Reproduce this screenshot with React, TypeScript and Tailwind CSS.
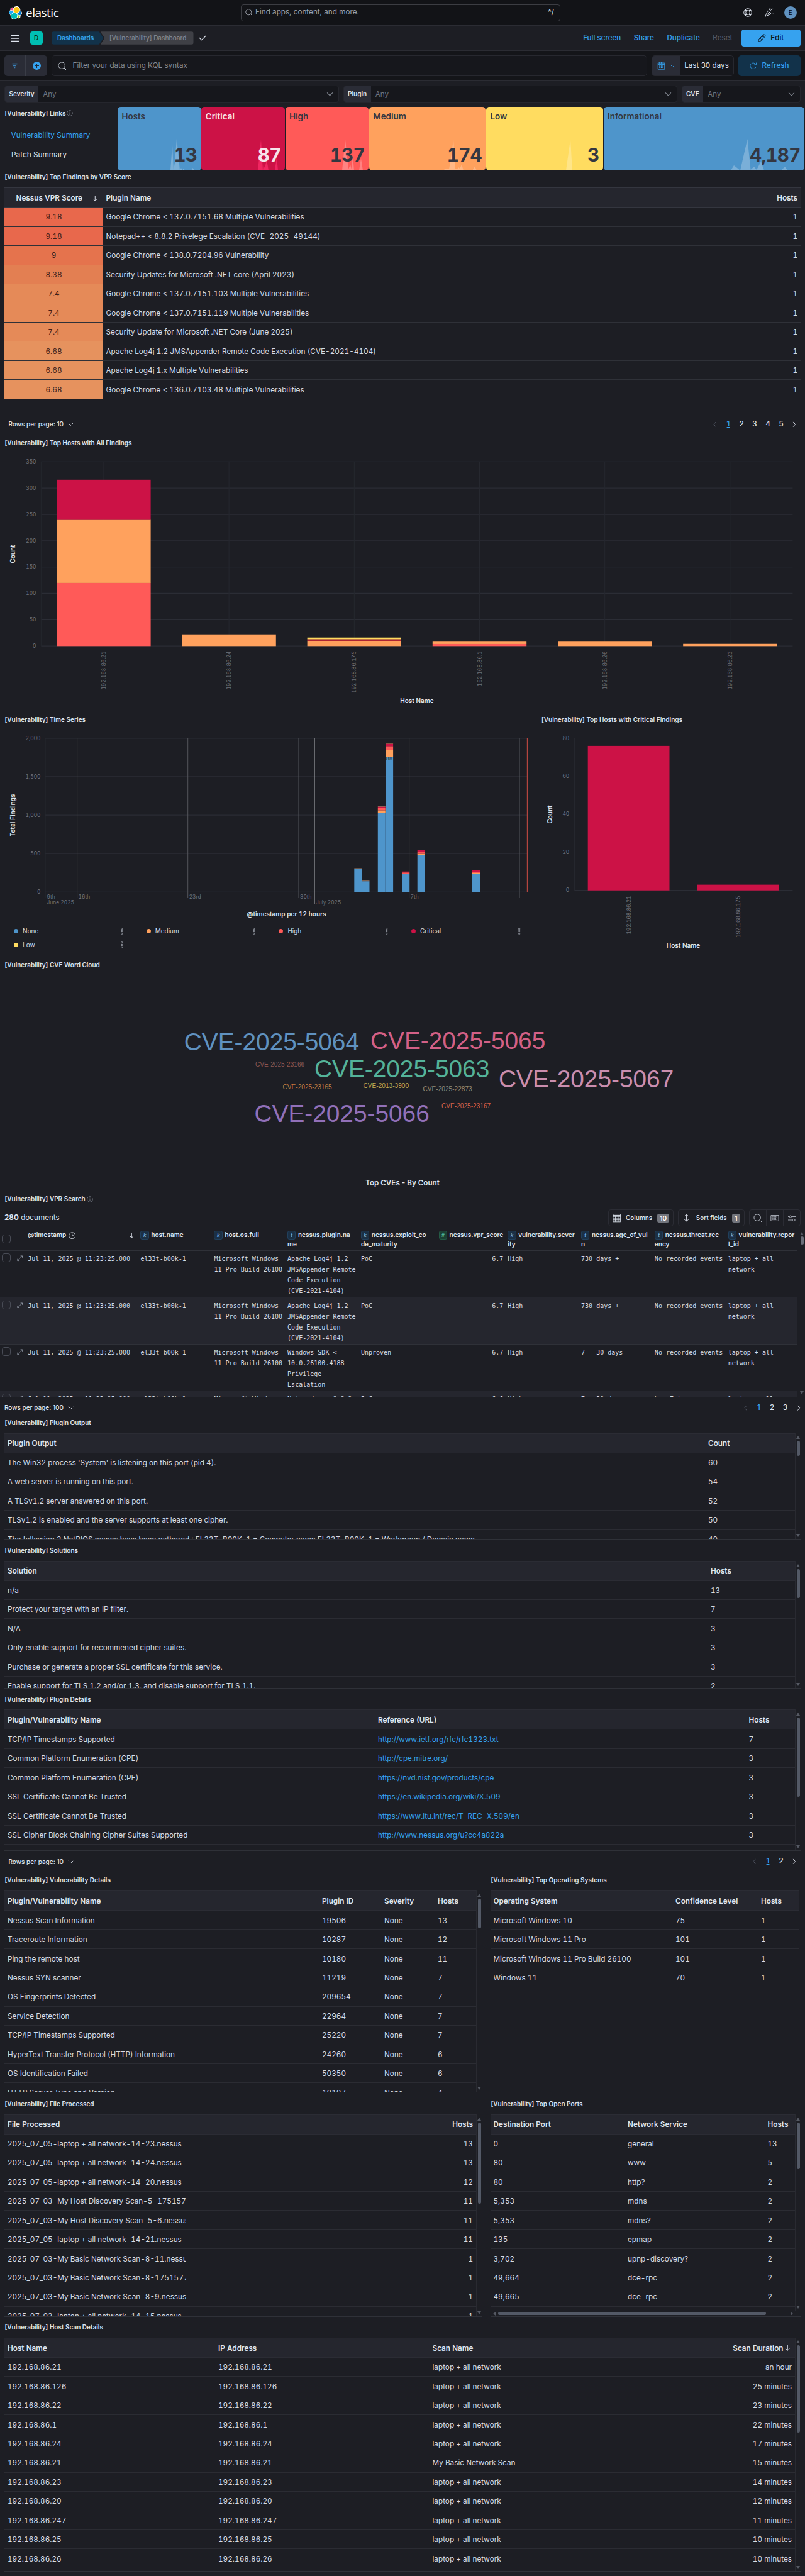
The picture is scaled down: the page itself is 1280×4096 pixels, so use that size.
import React from "react";

type Kids = { children?: React.ReactNode };

/* ---------- icons ---------- */

function ElasticMark() {
  return (
    <svg width="21" height="21" viewBox="0 0 32 32" className="shrink-0">
      <path fill="#fff" d="M32 16.77c0-2.677-1.66-5.013-4.157-5.93.111-.572.166-1.145.166-1.743C28.01 4.076 23.935 0 18.929 0a9.1 9.1 0 00-7.35 3.75 4.793 4.793 0 00-2.945-1.002 4.82 4.82 0 00-4.82 4.82c0 .585.11 1.157.305 1.676A6.345 6.345 0 000 15.196a6.34 6.34 0 004.172 5.957 8.985 8.985 0 00-.167 1.744 9.066 9.066 0 009.066 9.066 9.07 9.07 0 007.35-3.763c.835.654 1.863 1.015 2.934 1.015a4.82 4.82 0 004.82-4.82c0-.585-.11-1.156-.306-1.675A6.38 6.38 0 0032 16.771" />
      <path fill="#FEC514" d="M12.58 13.787l7.002 3.211 7.066-6.213a7.854 7.854 0 00.152-1.557c0-4.31-3.502-7.812-7.813-7.812a7.816 7.816 0 00-6.45 3.53l-1.177 6.1 1.22 2.741z" />
      <path fill="#02BCB7" d="M5.333 21.228A7.964 7.964 0 005.18 22.81c0 4.323 3.514 7.837 7.837 7.837a7.85 7.85 0 006.492-3.458l1.168-6.088-1.557-2.978-7.015-3.198-6.773 6.303z" />
      <path fill="#F04E98" d="M5.288 9.067l4.8 1.135L11.14 4.74a3.785 3.785 0 00-2.305-.767A3.804 3.804 0 005.03 7.777c0 .445.094.877.257 1.29z" />
      <path fill="#1BA9F5" d="M4.872 10.214c-2.145.709-3.602 2.745-3.602 5.004a5.258 5.258 0 003.377 4.91l6.732-6.086-1.237-2.644-5.27-1.184z" />
      <path fill="#93C90E" d="M20.874 27.19c.654.505 1.459.792 2.292.792A3.804 3.804 0 0026.97 24.18c0-.458-.08-.89-.243-1.29l-4.796-1.123-1.058 5.423z" />
      <path fill="#0077CC" d="M21.848 20.563l5.28 1.235c2.146-.709 3.602-2.745 3.602-5.004 0-2.165-1.34-4.102-3.377-4.884l-6.902 6.047 1.397 2.606z" />
    </svg>
  );
}

function Icon({ size = 13.4, className = "", children }: Kids & { size?: number; className?: string }) {
  return (
    <svg
      width={size}
      height={size}
      viewBox="0 0 16 16"
      fill="none"
      stroke="currentColor"
      strokeWidth="1.1"
      className={"shrink-0 " + className}
    >
      {children}
    </svg>
  );
}

const Search = ({ size, className }: { size?: number; className?: string }) => (
  <Icon size={size} className={className}>
    <circle cx="7" cy="7" r="6" />
    <path d="M11.3 11.3 15.5 15.5" />
  </Icon>
);
const ChevronDown = ({ size = 11, className }: { size?: number; className?: string }) => (
  <Icon size={size} className={className}>
    <path d="M1.5 5 8 11.5 14.5 5" strokeWidth="1.5" />
  </Icon>
);
const ChevronSide = ({ left, className }: { left?: boolean; className?: string }) => (
  <Icon size={9.5} className={className}>
    <path d={left ? "M10.5 1.5 5 8l5.5 6.5" : "M5.5 1.5 11 8l-5.5 6.5"} strokeWidth="1.6" />
  </Icon>
);
const ArrowDown = ({ size = 10.5 }: { size?: number }) => (
  <Icon size={size}>
    <path d="M8 1.5V14M3.500 9.800 8 14.300l4.500-4.500" strokeWidth="1.5" />
  </Icon>
);
const Info = () => (
  <Icon size={10} className="ml-[2px] text-[#6f747e]">
    <circle cx="8" cy="8" r="7" strokeWidth="1.3" />
    <path d="M8 7v4.500M8 4v1.500M6.500 7H8M6.500 11.500h3" strokeWidth="1.3" />
  </Icon>
);

/* ---------- shared pieces ---------- */

function Title({ children, info }: Kids & { info?: boolean }) {
  return (
    <h2 className="flex h-[20.4px] items-center pl-[7.5px] text-[10px] font-semibold whitespace-nowrap text-[#dfe5ef]">
      [Vulnerability] {children}
      {info && <Info />}
    </h2>
  );
}

function VScroll({ thumb, top }: { thumb: number; top: number }) {
  return (
    <div
      className="flex w-[9px] shrink-0 flex-col items-center border-l border-[#292a31] pb-[3px]"
      style={{ paddingTop: top }}
    >
      <span className="h-0 w-0 border-x-[3px] border-b-[5px] border-x-transparent border-b-[#555963]" />
      <span className="mt-[3px] w-[5px] rounded-full bg-[#535966]" style={{ height: thumb }} />
      <span className="mt-auto h-0 w-0 border-x-[3px] border-t-[5px] border-x-transparent border-t-[#555963]" />
    </div>
  );
}

type GridProps = {
  cols: string;
  head: React.ReactNode[];
  rows: React.ReactNode[][];
  rightFrom?: number;
  linkCol?: number;
};

function Grid({ cols, head, rows, rightFrom = 99, linkCol = -1 }: GridProps) {
  return (
    <div className="min-w-0 grow text-[11.75px] leading-[14px] text-[#d6dbe4] tabular-nums">
      <div
        className={
          "grid h-[32px] items-center border-t border-b border-[#2b2c34] bg-[#25262e] pt-[1.2px] font-semibold text-[#dfe5ef] " + cols
        }
      >
        {head.map((h, i) => (
          <div key={i} className={"truncate " + (i >= rightFrom ? "text-right" : "")}>
            {h}
          </div>
        ))}
      </div>
      {rows.map((r, ri) => (
        <div key={ri} className={"grid h-[30.46px] items-center border-b border-[#2b2c33] pt-[1.2px] " + cols}>
          {r.map((c, i) => (
            <div
              key={i}
              className={
                "overflow-hidden whitespace-nowrap " +
                (i >= rightFrom ? "text-right " : "") +
                (i === linkCol ? "text-[#36a2ef]" : "")
              }
            >
              {c}
            </div>
          ))}
        </div>
      ))}
    </div>
  );
}

function Pager({ per, pages, className = "" }: { per: number; pages: number; className?: string }) {
  const list = Array.from({ length: pages }, (_, i) => i + 1);
  return (
    <div className={"flex h-[20px] items-center justify-between text-[#dfe5ef] " + className}>
      <div className="flex items-center text-[10px] font-medium">
        Rows per page: {per}
        <ChevronDown size={9} className="ml-[7px]" />
      </div>
      <div className="flex items-center text-[11.7px] font-medium">
        <span className="flex w-[21px] justify-center text-[#535966]">
          <ChevronSide left />
        </span>
        {list.map((p) => (
          <span key={p} className={"w-[21px] text-center " + (p === 1 ? "text-[#36a2ef] underline" : "")}>
            {p}
          </span>
        ))}
        <span className="flex w-[21px] justify-center">
          <ChevronSide />
        </span>
      </div>
    </div>
  );
}

/* ---------- header bars ---------- */

function TopBar() {
  return (
    <header className="flex h-[41px] items-center border-b border-[#2b2c33] bg-[#121317] pr-[13px] pl-[13.5px]">
      <div className="flex w-[369.5px] items-center">
        <ElasticMark />
        <span className="ml-[6.5px] font-['Open_Sans'] text-[19px] leading-[20px] tracking-[-0.5px] text-white">
          elastic
        </span>
      </div>
      <div className="flex h-[27px] w-[508px] items-center rounded-[4px] border border-[#3c3d43] px-[6px] text-[11.7px] text-[#98a0ad]">
        <Search size={12} className="text-[#b9bec8]" />
        <span className="ml-[4px]">Find apps, content, and more.</span>
        <span className="mr-[3px] ml-auto text-[#dfe5ef]">^/</span>
      </div>
      <div className="ml-auto flex items-center text-[#dfe5ef]">
        <Icon size={14} className="mr-[20px]">
          <circle cx="8" cy="8" r="7.2" />
          <circle cx="8" cy="8" r="3.8" />
          <path d="M5.300 5.300 3 3M10.700 5.300 13 3M5.300 10.700 3 13M10.700 10.700 13 13" strokeWidth="2.6" />
        </Icon>
        <Icon size={14} className="mr-[17px]">
          <path d="M5.500 4.500 1 15l10.500-4.500zM4.200 7.800l4 4M3 10.800l2.500 2.500M7 6l3 3" />
          <path d="M8.500 3.500C9 2 8.500 1.500 8 .5M10 6c.5-3 2-3.500 3-3.300M12 8.500c1.500-.5 2.500 0 3 1M12.500 5.500h1M14.500 1v1M11 1v1" />
        </Icon>
        <span className="flex h-[20.5px] w-[20.5px] items-center justify-center rounded-full bg-[#6092c0] text-[10px] text-black">
          E
        </span>
      </div>
    </header>
  );
}

function NavBar() {
  return (
    <nav className="flex h-[40px] items-center border-b border-[#2b2c33] bg-[#1d1e24] pr-[7px] pl-[16.5px] text-[10px] font-medium text-[#36a2ef]">
      <svg width="14" height="12" viewBox="0 0 14 12" className="text-[#dfe5ef]">
        <path d="M0 1.500h14M0 6h14M0 10.500h14" stroke="currentColor" strokeWidth="1.7" />
      </svg>
      <span className="ml-[17px] flex h-[20.5px] w-[20px] items-center justify-center rounded-[4px] bg-[#00bfb3] text-[10px] text-[#0c1b1b]">
        D
      </span>
      <div className="ml-[14px] flex h-[20.5px] items-center">
        <span className="flex h-full w-[83px] items-center rounded-l-[4px] bg-[#12324a] pl-[9.5px] font-semibold [clip-path:polygon(0_0,76px_0,83px_50%,76px_100%,0_100%)]">
          Dashboards
        </span>
        <span className="-ml-[5px] flex h-full w-[148px] items-center rounded-r-[4px] bg-[#3f4046] pl-[14.5px] text-[#82868f] [clip-path:polygon(0_0,100%_0,100%_100%,0_100%,7px_50%)]">
          [Vulnerability] Dashboard
        </span>
      </div>
      <svg width="12" height="9" viewBox="0 0 12 9" className="ml-[8px] text-[#dfe5ef]">
        <path d="M.7 3.800 4.500 7.700 11.300 1" fill="none" stroke="currentColor" strokeWidth="1.1" />
      </svg>
      <div className="ml-auto flex items-center text-[11.6px]">
        <span className="mr-[20.5px]">Full screen</span>
        <span className="mr-[20.5px]">Share</span>
        <span className="mr-[20.5px]">Duplicate</span>
        <span className="mr-[14px] text-[#535966]">Reset</span>
        <span className="flex h-[27px] w-[94.5px] items-center justify-center rounded-[4px] bg-[#36a2ef] text-[11.7px] text-[#07101a]">
          <Icon size={13} className="mr-[7px]">
            <path d="M2 10.500 10.500 1.500c1-.8 2.600-.3 3.500.7s1 2 .2 2.900L5.600 13.800 1 15zM3.500 11l8-8M5 12.500l8-8" />
          </Icon>
          Edit
        </span>
      </div>
    </nav>
  );
}

function QueryBar() {
  return (
    <div className="flex h-[48px] items-center gap-[7px] border-b border-[#2b2c33] bg-[#141519] px-[7px] text-[11.7px]">
      <div className="flex h-[33.5px] w-[68px] rounded-[5px] bg-[#2a2c36] text-[#36a2ef]">
        <span className="flex w-1/2 items-center justify-center border-r border-[#3a3d47]">
          <svg width="9" height="9" viewBox="0 0 9 9">
            <path d="M.5 1.500h8M2 4.500h5M3.700 7.500h1.600" stroke="#3a80b8" strokeWidth="1.3" />
          </svg>
        </span>
        <span className="flex w-1/2 items-center justify-center">
          <svg width="13" height="13" viewBox="0 0 13 13">
            <circle cx="6.5" cy="6.5" r="6.5" fill="#36a2ef" />
            <path d="M6.500 3v7M3 6.500h7" stroke="#1d2a3a" strokeWidth="1.1" />
          </svg>
        </span>
      </div>
      <div className="flex h-[33.5px] grow items-center rounded-[5px] border border-[#27282f] bg-[#16171c] pl-[8.5px] text-[#858a94]">
        <Search size={14} className="text-[#cfd5df]" />
        <span className="ml-[10px]">Filter your data using KQL syntax</span>
      </div>
      <div className="flex h-[33.5px] w-[131px] overflow-hidden rounded-[5px] border border-[#27282f] bg-[#16171c] text-[#dfe5ef]">
        <span className="flex w-[44px] items-center justify-center gap-[7px] bg-[#2a2c36] text-[#36a2ef]">
          <Icon size={13}>
            <path d="M1.500 2.500h13v12.500h-13zM1.500 5.500h13M4.500.5v3M8 .5v3M11.500.5v3" />
            <path d="M4 8.500h8M4 11.500h8" strokeDasharray="1.8 1.3" strokeWidth="1.8" />
          </Icon>
          <ChevronDown size={9} />
        </span>
        <span className="flex grow items-center justify-center">Last 30 days</span>
      </div>
      <div className="flex h-[33.5px] w-[99px] items-center justify-center rounded-[5px] bg-[#12324a] font-medium text-[#36a2ef]">
        <Icon size={12} className="mr-[7px]">
          <path d="M13.500 10A6.300 6.300 0 1 1 11 2.500M14 .8v4.200H9.800" />
        </Icon>
        Refresh
      </div>
    </div>
  );
}

function Control({ label, width }: { label: string; width: string }) {
  return (
    <div className={"flex h-[27px] overflow-hidden rounded-[4px] border border-[#25262d] bg-[#16171c] " + width}>
      <span className="flex items-center bg-[#2a2c36] px-[6.5px] text-[10px] font-semibold text-[#dfe5ef]">{label}</span>
      <span className="flex grow items-center pt-[2px] pl-[7px] text-[11.7px] text-[#6f747e]">Any</span>
      <span className="flex items-center pr-[8px] text-[#858a94]">
        <ChevronDown />
      </span>
    </div>
  );
}

/* ---------- metric tiles ---------- */

type Tile = { label: string; value: string; box: string; w: number; spark: string; light?: boolean };

const tiles: Tile[] = [
  { label: "Hosts", value: "13", box: "bg-[#4e95cb]", w: 132.7, spark: "84,101 87,60 89,101 91,88 94,50 99,101 101,97 103,101 105,98 107,101 117,101 119.5,97 122,101" },
  { label: "Critical", value: "87", box: "bg-[#cc1246]", w: 132.7, light: true, spark: "90,101 95,52 98,101 99,92 101,97 104,84 107,101 117,101 120,80 122,101" },
  { label: "High", value: "137", box: "bg-[#ff5a58]", w: 132.7, spark: "90,101 95,52 99,90 100,99 103,92 105,99 107,78 109,101 117,101 120,82 123,101" },
  { label: "Medium", value: "174", box: "bg-[#ffa15d]", w: 185.5, spark: "118,101 121,98 124,98 127,99 129,88 134,52 137,98 140,99 142,96 144,98 147,92 150,101 164,101 168,95 171,101" },
  { label: "Low", value: "3", box: "bg-[#ffdc60]", w: 186, spark: "127,101 134,52 137,101" },
  { label: "Informational", value: "4,187", box: "bg-[#4e95cb]", w: 319.5, spark: "202,101 207,93 217,101 228.5,51 233.5,100 239,95 243,100 250,87 255,101 282,101 288,95 292,101" },
];

function Metrics() {
  return (
    <div className="flex gap-[0.6px]">
      {tiles.map((t) => (
        <div
          key={t.label}
          style={{ width: t.w }}
          className={
            "relative flex h-[101.4px] flex-col justify-between overflow-hidden rounded-[5px] px-[6.5px] " +
            t.box +
            (t.light ? " text-[#f6e4ea]" : " text-[#343741]")
          }
        >
          <svg className="absolute bottom-0 left-0" width={t.w} height="101.4">
            <polygon points={t.spark} fill={t.light ? "#ff2f6c" : "#ffffff"} opacity={t.light ? 0.7 : 0.25} />
          </svg>
          <span className="relative mt-[7px] text-[13.4px] leading-[17px] font-semibold">{t.label}</span>
          <span className="relative mb-[7px] text-right text-[29.6px] leading-[36px] font-bold tracking-[-0.8px] tabular-nums">
            {t.value}
          </span>
        </div>
      ))}
    </div>
  );
}

/* ---------- top findings ---------- */

const findings: [string, string, string][] = [
  ["9.18", "bg-[#e8684c]", "Google Chrome < 137.0.7151.68 Multiple Vulnerabilities"],
  ["9.18", "bg-[#e8684c]", "Notepad++ < 8.8.2 Privelege Escalation (CVE-2025-49144)"],
  ["9", "bg-[#e5734d]", "Google Chrome < 138.0.7204.96 Vulnerability"],
  ["8.38", "bg-[#e37f52]", "Security Updates for Microsoft .NET core (April 2023)"],
  ["7.4", "bg-[#e58a58]", "Google Chrome < 137.0.7151.103 Multiple Vulnerabilities"],
  ["7.4", "bg-[#e58a58]", "Google Chrome < 137.0.7151.119 Multiple Vulnerabilities"],
  ["7.4", "bg-[#e58a58]", "Security Update for Microsoft .NET Core (June 2025)"],
  ["6.68", "bg-[#e6925e]", "Apache Log4j 1.2 JMSAppender Remote Code Execution (CVE-2021-4104)"],
  ["6.68", "bg-[#e6925e]", "Apache Log4j 1.x Multiple Vulnerabilities"],
  ["6.68", "bg-[#e6925e]", "Google Chrome < 136.0.7103.48 Multiple Vulnerabilities"],
];

function TopFindings() {
  return (
    <section className="h-[423px]">
      <Title>Top Findings by VPR Score</Title>
      <div className="mx-[7px] mt-[6.2px] text-[11.75px] leading-[14px] text-[#d6dbe4] tabular-nums">
        <div className="flex h-[32px] items-center border-t border-b border-[#34363f] bg-[#25262e] pt-[1.2px] font-semibold text-[#dfe5ef]">
          <div className="flex w-[157px] items-center pr-[8px] pl-[18.5px]">
            <span className="grow">Nessus VPR Score</span>
            <ArrowDown />
          </div>
          <div className="grow pl-[4.5px]">Plugin Name</div>
          <div className="pr-[5px]">Hosts</div>
        </div>
        {findings.map(([score, bg, name], i) => (
          <div key={i} className="flex h-[30.46px] items-center border-b border-[#2f3138]">
            <div className={"flex h-full w-[157px] items-center justify-center pt-[1.2px] text-[#3f2019] " + bg}>{score}</div>
            <div className="grow pt-[1.2px] pl-[4.5px]">{name}</div>
            <div className="pt-[1.2px] pr-[5px]">1</div>
          </div>
        ))}
      </div>
      <Pager per={10} pages={5} className="mt-[30px] pr-[6.5px] pl-[13.5px]" />
    </section>
  );
}

/* ---------- charts ---------- */

const BLUE = "#4e95cb";
const RED = "#cc1246";
const HIGH = "#ff5a58";
const MED = "#ffa15d";
const LOW = "#ffdc60";
const GRID = "#2b2d35";
const AXIS = "#6c7079";

function Rotated({ x, y, children, anchor = "end", bold }: Kids & { x: number; y: number; anchor?: "end" | "middle"; bold?: boolean }) {
  return (
    <text
      transform={`translate(${x} ${y}) rotate(-90)`}
      textAnchor={anchor}
      fontSize={bold ? 10 : 8.4}
      fontWeight={bold ? 600 : 400}
      fill={bold ? "#dfe5ef" : AXIS}
    >
      {children}
    </text>
  );
}

const hostBars: { host: string; parts: [number, string][] }[] = [
  { host: "192.168.86.21", parts: [[120, HIGH], [120, MED], [76, RED]] },
  { host: "192.168.86.24", parts: [[22, MED]] },
  { host: "192.168.86.175", parts: [[10, MED], [3, "#b42335"], [3, LOW]] },
  { host: "192.168.86.1", parts: [[4, HIGH], [4.2, MED]] },
  { host: "192.168.86.26", parts: [[8.2, MED]] },
  { host: "192.168.86.23", parts: [[4, MED]] },
];

function HostsChart() {
  const top = 19.4;
  const base = 312.1;
  const u = (base - top) / 350;
  return (
    <svg width="1280" height="412" className="block tabular-nums">
      {[0, 50, 100, 150, 200, 250, 300, 350].map((v) => (
        <g key={v}>
          <line x1="65.3" x2="1260.4" y1={base - v * u} y2={base - v * u} stroke={GRID} strokeWidth="1.2" />
          <text x="57.5" y={base - v * u + 2.7} textAnchor="end" fontSize="8.4" fill={AXIS}>
            {v}
          </text>
        </g>
      ))}
      <line x1="65.3" x2="65.3" y1={top} y2={base} stroke="#25272e" />
      {hostBars.map((b, i) => {
        const cx = 164.9 + i * 199.2;
        let acc = 0;
        return (
          <g key={b.host}>
            <line x1={cx} x2={cx} y1={top} y2={base} stroke="#26282f" />
            {b.parts.map(([n, c], j) => {
              acc += n;
              return <rect key={j} x={cx - 74.7} width="149.4" y={base - acc * u} height={n * u + 0.2} fill={c} />;
            })}
            <Rotated x={cx + 3} y={320.5}>
              {b.host}
            </Rotated>
          </g>
        );
      })}
      <Rotated x={24} y={166} anchor="middle" bold>
        Count
      </Rotated>
      <text x="663" y="403" textAnchor="middle" fontSize="10" fontWeight="600" fill="#dfe5ef">
        Host Name
      </text>
    </svg>
  );
}

/* stacks are listed bottom-up as [upper edge, colour] in drawing units */
const series: { x: number; parts: [number, string][] }[] = [
  { x: 563.3, parts: [[226.5, BLUE], [225.5, "#b08468"]] },
  { x: 575.5, parts: [[246.2, BLUE], [245.3, "#a8846c"]] },
  { x: 600.8, parts: [[138, BLUE], [133.4, MED], [129.7, HIGH], [127.9, RED], [126.5, "#a8655a"]] },
  { x: 613.1, parts: [[48.3, BLUE], [37.8, MED], [31.3, HIGH], [27.6, RED], [26, "#a8764e"]] },
  { x: 639.2, parts: [[234, BLUE], [232.2, HIGH], [230.7, RED]] },
  { x: 663.7, parts: [[204.2, BLUE], [202.6, MED], [199, HIGH], [196.8, RED]] },
  { x: 751, parts: [[234.5, BLUE], [233, MED], [231, HIGH], [228.5, RED]] },
];

function TimeSeries() {
  const marks: [number, string][] = [
    [122.6, "16th"],
    [298.7, "23rd"],
    [475, "30th"],
    [650.6, "7th"],
    [826, ""],
  ];
  return (
    <svg width="845" height="310" className="block tabular-nums">
      {[0, 500, 1000, 1500, 2000].map((v) => {
        const y = 263.3 - (v / 2000) * 244.5;
        return (
          <g key={v}>
            <line x1="72" x2="838.4" y1={y} y2={y} stroke={GRID} strokeWidth="1.2" />
            <text x="64.5" y={y + 2.7} textAnchor="end" fontSize="8.4" fill={AXIS}>
              {v.toLocaleString("en-US")}
            </text>
          </g>
        );
      })}
      <line x1="72" x2="72" y1="18.8" y2="273" stroke="#26282f" />
      {marks.map(([x, label]) => (
        <g key={x}>
          <line x1={x} x2={x} y1="18.8" y2="273" stroke="#54565c" />
          <text x={x + 2} y="273.5" fontSize="8.4" fill={AXIS}>
            {label}
          </text>
        </g>
      ))}
      <text x="74.5" y="273.5" fontSize="8.4" fill={AXIS}>
        9th
      </text>
      <text x="74.5" y="283" fontSize="8.4" fill={AXIS}>
        June 2025
      </text>
      <line x1="500" x2="500" y1="18.8" y2="282.5" stroke="#b4b6ba" />
      <text x="502" y="283" fontSize="8.4" fill={AXIS}>
        July 2025
      </text>
      {series.map((s) => {
        let prev = 263.5;
        return s.parts.map(([y, c]) => {
          const r = <rect key={s.x + c} x={s.x} width="12" y={y} height={prev - y} fill={c} />;
          prev = y;
          return r;
        });
      })}
      <text x="619" y="53.5" textAnchor="middle" fontSize="8" fill="#1b2f45">
        88
      </text>
      <line x1="838.4" x2="838.4" y1="18.8" y2="263.3" stroke="#b5453f" strokeWidth="1.2" />
      <Rotated x={24} y={141.5} anchor="middle" bold>
        Total Findings
      </Rotated>
      <text x="455.5" y="301.5" textAnchor="middle" fontSize="10" fontWeight="600" fill="#dfe5ef">
        @timestamp per 12 hours
      </text>
    </svg>
  );
}

const legend: [string, string][] = [
  ["None", "bg-[#4e95cb]"],
  ["Medium", "bg-[#ffa15d]"],
  ["High", "bg-[#ff5a58]"],
  ["Critical", "bg-[#cc1246]"],
  ["Low", "bg-[#ffdc60]"],
];

function Legend() {
  return (
    <div className="mt-[4px] ml-[22px] grid grid-cols-[repeat(4,210.7px)] text-[10px] text-[#d6dbe4]">
      {legend.map(([name, dot]) => (
        <div key={name} className="flex h-[22px] items-center">
          <span className={"h-[7px] w-[7px] rounded-full " + dot} />
          <span className="ml-[7px] w-[155.5px]">{name}</span>
          <svg width="4" height="11" viewBox="0 0 4 11">
            <path d="M.7.700h2v2h-2zM.7 4.500h2v2h-2zM.7 8.300h2v2h-2z" fill="none" stroke="#9aa0aa" strokeWidth=".8" />
          </svg>
        </div>
      ))}
    </div>
  );
}

function CriticalChart() {
  const y = (v: number) => 260.7 - (v / 80) * 241.9;
  return (
    <svg width="425" height="360" className="block tabular-nums">
      {[0, 20, 40, 60, 80].map((v) => (
        <text key={v} x="51.3" y={y(v) + 2.7} textAnchor="end" fontSize="8.4" fill={AXIS}>
          {v}
        </text>
      ))}
      <line x1="59.5" x2="59.5" y1={y(80)} y2={y(0)} stroke="#25272e" />
      <line x1="59.5" x2="406.4" y1={y(0)} y2={y(0)} stroke={GRID} strokeWidth="1.2" />
      <rect x="80.7" width="129.8" y={y(76)} height={y(0) - y(76)} fill={RED} />
      <rect x="254.6" width="129.8" y={y(3)} height={y(0) - y(3)} fill={RED} />
      <Rotated x={149} y={269.5}>
        192.168.86.21
      </Rotated>
      <Rotated x={322.5} y={269.5}>
        192.168.86.175
      </Rotated>
      <Rotated x={23.5} y={140} anchor="middle" bold>
        Count
      </Rotated>
      <text x="232.5" y="352" textAnchor="middle" fontSize="10" fontWeight="600" fill="#dfe5ef">
        Host Name
      </text>
    </svg>
  );
}

/* ---------- word cloud ---------- */

const words: [string, number, number, number, string][] = [
  ["CVE-2025-5064", 292.8, 125, 38.8, "#6092c0"],
  ["CVE-2025-5065", 589, 122.8, 38.8, "#d36086"],
  ["CVE-2025-5063", 500, 168.2, 38.8, "#54b399"],
  ["CVE-2025-5067", 793, 183.8, 38.8, "#ca8eae"],
  ["CVE-2025-5066", 404.5, 239.2, 38.8, "#9170b8"],
  ["CVE-2025-23166", 406, 151.2, 10.15, "#8f5650"],
  ["CVE-2025-23165", 449.5, 186.5, 10.15, "#c27d42"],
  ["CVE-2013-3900", 577.5, 184.5, 10.15, "#c0ac52"],
  ["CVE-2025-22873", 672.5, 190, 10.15, "#958b76"],
  ["CVE-2025-23167", 702, 216.7, 10.15, "#d9604a"],
];

function WordCloud() {
  return (
    <svg width="1280" height="320" className="block font-['Liberation_Sans']">
      {words.map(([w, x, y, s, c]) => (
        <text key={w} x={x} y={y} fontSize={s} fill={c}>
          {w}
        </text>
      ))}
    </svg>
  );
}

/* ---------- VPR search grid ---------- */

function Token({ t }: { t: string }) {
  const num = t === "#";
  return (
    <span
      className={
        "mr-[3.5px] inline-flex h-[13.4px] w-[13.4px] items-center justify-center rounded-[3px] border align-middle text-[8px] leading-none font-semibold italic " +
        (num ? "border-[#245a45] bg-[#1b4034] text-[#54b399]" : "border-[#21405c] bg-[#1b3045] text-[#6fa3d0]")
      }
    >
      {t}
    </span>
  );
}

const vprHead: [string, string, string][] = [
  ["k", "host.name", ""],
  ["k", "host.os.full", ""],
  ["t", "nessus.plugin.na", "me"],
  ["k", "nessus.exploit_co", "de_maturity"],
  ["#", "nessus.vpr_score", ""],
  ["k", "vulnerability.sever", "ity"],
  ["t", "nessus.age_of_vul", "n"],
  ["t", "nessus.threat.rec", "ency"],
  ["k", "vulnerability.repor", "t_id"],
];

const log4j = "Apache Log4j 1.2\nJMSAppender Remote\nCode Execution\n(CVE-2021-4104)";
const vprRows: string[][] = [
  [log4j, "PoC", "6.7", "High", "730 days +", "No recorded events"],
  [log4j, "PoC", "6.7", "High", "730 days +", "No recorded events"],
  ["Windows SDK <\n10.0.26100.4188\nPrivilege\nEscalation", "Unproven", "6.7", "High", "7 - 30 days", "No recorded events"],
  ["Notepad++ < 8.8.2", "PoC", "6.6", "High", "7 - 30 days", "Low Extreme"],
];

const vprCols =
  "grid grid-cols-[18px_26.2px_179.3px_117px_116.6px_116.8px_116.8px_116.6px_116.8px_116.8px_116.8px_115px]";

const Box = () => <span className="ml-[3.3px] block h-[14px] w-[13.5px] rounded-[4px] border border-[#484b55]" />;

function VprSearch() {
  return (
    <section className="h-[355.6px]">
      <Title info>VPR Search</Title>
      <div className="flex h-[34px] items-center px-[7px] pt-[6px] text-[#dfe5ef]">
        <div className="grow text-[11.7px]">
          <b>280</b> documents
        </div>
        <div className="mr-[7px] flex h-[27px] w-[104.5px] items-center justify-between rounded-[4px] border border-[#2b2c34] px-[6px] text-[10px] font-medium">
          <Icon size={13.5}>
            <path d="M1 .8h14v14.400H1zM1 3h14M1 5h14M5.500 5v10M10.500 5v10M1 8.300h14M1 11.600h14" />
          </Icon>
          Columns
          <span className="rounded-[3px] bg-[#72757d] px-[4px] text-[10px] leading-[14px] font-semibold text-white">10</span>
        </div>
        <div className="mr-[7px] flex h-[27px] w-[105.5px] items-center justify-between rounded-[4px] border border-[#2b2c34] px-[6px] text-[10px] font-medium">
          <Icon size={13}>
            <path d="M8 1.500v13M4 5 8 1l4 4M4 11l4 4 4-4" />
          </Icon>
          Sort fields
          <span className="rounded-[3px] bg-[#72757d] px-[4px] text-[10px] leading-[14px] font-semibold text-white">1</span>
        </div>
        <div className="flex h-[27px] w-[82.5px] items-center divide-x divide-[#2b2c34] rounded-[4px] border border-[#2b2c34] text-[#b9bec8]">
          <span className="flex h-full flex-1 items-center justify-center">
            <Search size={14} />
          </span>
          <span className="flex h-full flex-1 items-center justify-center">
            <Icon size={14}>
              <path d="M1 3h14v10H1z" />
              <path d="M3 5.500h10M3 8h8M3 10.500h10" strokeDasharray="1.3 .7" strokeWidth="1.5" />
            </Icon>
          </span>
          <span className="flex h-full flex-1 items-center justify-center">
            <Icon size={12.5}>
              <circle cx="5" cy="4.5" r="2" />
              <circle cx="11" cy="11.5" r="2" />
              <path d="M0 4.500h3M7 4.500h9M0 11.500h9M13 11.500h3" />
            </Icon>
          </span>
        </div>
      </div>
      <div className="flex h-[271px] overflow-hidden border-b border-[#2b2c33]">
        <div className="min-w-0 grow overflow-hidden">
          <div className={"h-[38px] items-start border-b border-[#2f3138] pt-[5.5px] text-[10px] leading-[13.7px] font-semibold text-[#dfe5ef] " + vprCols}>
            <div className="pt-[7px]">
              <Box />
            </div>
            <div />
            <div className="flex h-[16px] items-center pr-[9px]">
              @timestamp
              <Icon size={11.5} className="ml-[3.5px]">
                <circle cx="8" cy="8" r="7" />
                <path d="M8 3.500V8h4" />
              </Icon>
              <span className="ml-auto">
                <ArrowDown />
              </span>
            </div>
            {vprHead.map(([t, a, b]) => (
              <div key={a} className={"whitespace-nowrap " + (t === "#" ? "pr-[7px] text-right" : "")}>
                <div className="flex h-[15.5px] items-center">
                  {t === "#" && <span className="grow" />}
                  <Token t={t} />
                  {a}
                </div>
                {b}
              </div>
            ))}
          </div>
          <div className="font-['DejaVu_Sans_Mono'] text-[10.03px] leading-[17px] whitespace-pre text-[#d6dbe4]">
            {vprRows.map((r, i) => (
              <div
                key={i}
                className={"h-[74.4px] border-b border-[#2f3138] pt-[4.5px] " + vprCols + (i % 2 ? " bg-[#25262e]" : "")}
              >
                <Box />
                <div className="pt-[3px] pl-[8.5px] text-[#98a0ad]">
                  <Icon size={9.5}>
                    <path d="M1.500 14.500l13-13M9.500 1.500h5v5M6.500 14.500h-5v-5" strokeWidth="1.4" />
                  </Icon>
                </div>
                <div>Jul 11, 2025 @ 11:23:25.000</div>
                <div>el33t-b00k-1</div>
                <div>{"Microsoft Windows\n11 Pro Build 26100"}</div>
                <div>{r[0]}</div>
                <div>{r[1]}</div>
                <div className="pr-[7px] text-right">{r[2]}</div>
                <div>{r[3]}</div>
                <div>{r[4]}</div>
                <div>{r[5]}</div>
                <div>{"laptop + all\nnetwork"}</div>
              </div>
            ))}
          </div>
        </div>
        <div className="flex w-[13px] flex-col items-center pt-[8px] pb-[4px] pl-[3px]">
          <span className="border-x-[3px] border-b-[5px] border-x-transparent border-b-[#555963]" />
          <span className="mt-[2px] h-[13.5px] w-[5px] rounded-full bg-[#6b6f7a]" />
          <span className="mt-auto border-x-[3px] border-t-[5px] border-x-transparent border-t-[#555963]" />
        </div>
      </div>
      <Pager per={100} pages={3} className="mt-[7px] pl-[7px]" />
    </section>
  );
}

/* ---------- table data ---------- */

const pluginOutput = [
  ["The Win32 process 'System' is listening on this port (pid 4).", "60"],
  ["A web server is running on this port.", "54"],
  ["A TLSv1.2 server answered on this port.", "52"],
  ["TLSv1.2 is enabled and the server supports at least one cipher.", "50"],
  ["The following 2 NetBIOS names have been gathered : EL33T-B00K-1 = Computer name EL33T-B00K-1 = Workgroup / Domain name", "40"],
];
const solutions = [
  ["n/a", "13"],
  ["Protect your target with an IP filter.", "7"],
  ["N/A", "3"],
  ["Only enable support for recommened cipher suites.", "3"],
  ["Purchase or generate a proper SSL certificate for this service.", "3"],
  ["Enable support for TLS 1.2 and/or 1.3, and disable support for TLS 1.1.", "2"],
];
const details = [
  ["TCP/IP Timestamps Supported", "http://www.ietf.org/rfc/rfc1323.txt", "7"],
  ["Common Platform Enumeration (CPE)", "http://cpe.mitre.org/", "3"],
  ["Common Platform Enumeration (CPE)", "https://nvd.nist.gov/products/cpe", "3"],
  ["SSL Certificate Cannot Be Trusted", "https://en.wikipedia.org/wiki/X.509", "3"],
  ["SSL Certificate Cannot Be Trusted", "https://www.itu.int/rec/T-REC-X.509/en", "3"],
  ["SSL Cipher Block Chaining Cipher Suites Supported", "http://www.nessus.org/u?cc4a822a", "3"],
];
const vulns = [
  ["Nessus Scan Information", "19506", "None", "13"],
  ["Traceroute Information", "10287", "None", "12"],
  ["Ping the remote host", "10180", "None", "11"],
  ["Nessus SYN scanner", "11219", "None", "7"],
  ["OS Fingerprints Detected", "209654", "None", "7"],
  ["Service Detection", "22964", "None", "7"],
  ["TCP/IP Timestamps Supported", "25220", "None", "7"],
  ["HyperText Transfer Protocol (HTTP) Information", "24260", "None", "6"],
  ["OS Identification Failed", "50350", "None", "6"],
  ["HTTP Server Type and Version", "10107", "None", "4"],
];
const systems = [
  ["Microsoft Windows 10", "75", "1"],
  ["Microsoft Windows 11 Pro", "101", "1"],
  ["Microsoft Windows 11 Pro Build 26100", "101", "1"],
  ["Windows 11", "70", "1"],
];
const files = [
  ["2025_07_05-laptop + all network-14-23.nessus", "13"],
  ["2025_07_05-laptop + all network-14-24.nessus", "13"],
  ["2025_07_05-laptop + all network-14-20.nessus", "12"],
  ["2025_07_03-My Host Discovery Scan-5-1751577", "11"],
  ["2025_07_03-My Host Discovery Scan-5-6.nessus", "11"],
  ["2025_07_05-laptop + all network-14-21.nessus", "11"],
  ["2025_07_03-My Basic Network Scan-8-11.nessus", "1"],
  ["2025_07_03-My Basic Network Scan-8-1751577", "1"],
  ["2025_07_03-My Basic Network Scan-8-9.nessus", "1"],
  ["2025_07_03-laptop + all network-14-15.nessus", "1"],
];
const ports = [
  ["0", "general", "13"],
  ["80", "www", "5"],
  ["80", "http?", "2"],
  ["5,353", "mdns", "2"],
  ["5,353", "mdns?", "2"],
  ["135", "epmap", "2"],
  ["3,702", "upnp-discovery?", "2"],
  ["49,664", "dce-rpc", "2"],
  ["49,665", "dce-rpc", "2"],
];
const net = "laptop + all network";
const scans = [
  ["192.168.86.21", net, "an hour"],
  ["192.168.86.126", net, "25 minutes"],
  ["192.168.86.22", net, "23 minutes"],
  ["192.168.86.1", net, "22 minutes"],
  ["192.168.86.24", net, "17 minutes"],
  ["192.168.86.21", "My Basic Network Scan", "15 minutes"],
  ["192.168.86.23", net, "14 minutes"],
  ["192.168.86.20", net, "12 minutes"],
  ["192.168.86.247", net, "11 minutes"],
  ["192.168.86.25", net, "10 minutes"],
  ["192.168.86.26", net, "10 minutes"],
];

/* ---------- page ---------- */

export default function App() {
  return (
    <div className="h-[4096px] w-[1280px] overflow-hidden bg-[#1d1e24] font-[Inter,sans-serif] text-[#dfe5ef]">
      <TopBar />
      <NavBar />
      <QueryBar />
      <div className="flex h-[41px] items-start gap-[7px] px-[7px] pt-[7px]">
        <Control label="Severity" width="w-[531.5px]" />
        <Control label="Plugin" width="w-[531px]" />
        <Control label="CVE" width="w-[189.5px]" />
      </div>

      <div className="flex h-[101.6px]">
        <section className="w-[187px] shrink-0">
          <Title info>Links</Title>
          <div className="mt-[14.5px] ml-[11.5px] flex flex-col gap-[10.5px] text-[11.8px]">
            <span className="flex h-[20px] items-center border-l-[1.5px] border-[#36a2ef] pt-[2px] pl-[5px] text-[#36a2ef]">
              Vulnerability Summary
            </span>
            <span className="flex h-[20px] items-center pt-[2px] pl-[6.5px]">Patch Summary</span>
          </div>
        </section>
        <Metrics />
      </div>

      <TopFindings />

      <section className="h-[440.2px]">
        <Title>Top Hosts with All Findings</Title>
        <HostsChart />
      </section>

      <div className="flex h-[389.8px]">
        <section className="w-[853.5px] shrink-0">
          <Title>Time Series</Title>
          <TimeSeries />
          <Legend />
        </section>
        <section>
          <Title>Top Hosts with Critical Findings</Title>
          <CriticalChart />
        </section>
      </div>

      <section className="h-[371.8px]">
        <Title>CVE Word Cloud</Title>
        <WordCloud />
        <div className="pt-[8px] text-center text-[11.7px] font-semibold">Top CVEs - By Count</div>
      </section>

      <VprSearch />

      <section className="h-[203px]">
        <Title>Plugin Output</Title>
        <div className="mx-[7px] mt-[6.2px] flex h-[169.2px] overflow-hidden border-b border-[#2f3138]">
          <Grid cols="grid-cols-[1114px_1fr] pl-[5px]" head={["Plugin Output", "Count"]} rows={pluginOutput} />
          <VScroll thumb={24} top={4} />
        </div>
      </section>

      <section className="h-[236.9px]">
        <Title>Solutions</Title>
        <div className="mx-[7px] mt-[6.2px] flex h-[203.2px] overflow-hidden border-b border-[#2f3138]">
          <Grid cols="grid-cols-[1118px_1fr] pl-[5px]" head={["Solution", "Hosts"]} rows={solutions} />
          <VScroll thumb={46} top={5} />
        </div>
      </section>

      <section className="h-[287.9px]">
        <Title>Plugin Details</Title>
        <div className="mx-[7px] mt-[6.2px] flex h-[224.2px] overflow-hidden border-b border-[#2f3138]">
          <Grid
            cols="grid-cols-[589px_589.5px_1fr] pl-[5px]"
            head={["Plugin/Vulnerability Name", "Reference (URL)", "Hosts"]}
            rows={details}
            linkCol={1}
          />
          <VScroll thumb={126} top={5} />
        </div>
        <Pager per={10} pages={2} className="mt-[7.5px] pr-[6.5px] pl-[13.5px]" />
      </section>

      <div className="flex h-[355.2px]">
        <section className="w-[773px] shrink-0">
          <Title>Vulnerability Details</Title>
          <div className="mt-[6.2px] ml-[7px] flex h-[321px] w-[759px] overflow-hidden border-b border-[#2f3138]">
            <Grid
              cols="grid-cols-[500px_99px_85px_1fr] pl-[5px]"
              head={["Plugin/Vulnerability Name", "Plugin ID", "Severity", "Hosts"]}
              rows={vulns}
            />
            <VScroll thumb={47} top={5} />
          </div>
        </section>
        <section className="grow">
          <Title>Top Operating Systems</Title>
          <div className="mt-[6.2px] ml-[6.5px] flex w-[490px]">
            <Grid
              cols="grid-cols-[289.5px_136px_1fr] pl-[5px]"
              head={["Operating System", "Confidence Level", "Hosts"]}
              rows={systems}
            />
          </div>
        </section>
      </div>

      <div className="flex h-[355.4px]">
        <section className="w-[773px] shrink-0">
          <Title>File Processed</Title>
          <div className="mt-[6.2px] ml-[7px] flex h-[322px] w-[759px] overflow-hidden border-b border-[#2f3138]">
            <Grid
              cols="grid-cols-[282.5px_1fr] pl-[5px] pr-[5px]"
              head={["File Processed", "Hosts"]}
              rows={files}
              rightFrom={1}
            />
            <VScroll thumb={129} top={5} />
          </div>
        </section>
        <section className="grow">
          <Title>Top Open Ports</Title>
          <div className="mt-[6.2px] ml-[6.5px] h-[322px] w-[493.5px] border-b border-[#2f3138]">
            <div className="flex h-[313px] overflow-hidden border-b border-[#292a31]">
              <Grid
                cols="grid-cols-[213.5px_222.5px_1fr] pl-[5px]"
                head={["Destination Port", "Network Service", "Hosts"]}
                rows={ports}
              />
              <VScroll thumb={74} top={5} />
            </div>
            <div className="flex h-[8px] w-[481px] items-center pl-[4.5px]">
              <span className="border-y-[3px] border-r-[4px] border-y-transparent border-r-[#555963]" />
              <span className="ml-[4px] h-[5px] w-[426px] rounded-full bg-[#535966]" />
              <span className="ml-auto border-y-[3px] border-l-[4px] border-y-transparent border-l-[#555963]" />
            </div>
          </div>
        </section>
      </div>

      <section>
        <Title>Host Scan Details</Title>
        <div className="mx-[7px] mt-[6.2px] flex h-[372.4px] overflow-hidden border-b border-[#2f3138]">
          <Grid
            cols="grid-cols-[335px_340.5px_471px_1fr] pl-[5px] pr-[5px]"
            head={[
              "Host Name",
              "IP Address",
              "Scan Name",
              <span className="flex items-center justify-end gap-[1px] pr-[2px]">
                Scan Duration
                <ArrowDown />
              </span>,
            ]}
            rows={scans.map(([ip, name, d]) => [ip, ip, name, d])}
            rightFrom={3}
          />
          <VScroll thumb={139} top={4} />
        </div>
      </section>
    </div>
  );
}
